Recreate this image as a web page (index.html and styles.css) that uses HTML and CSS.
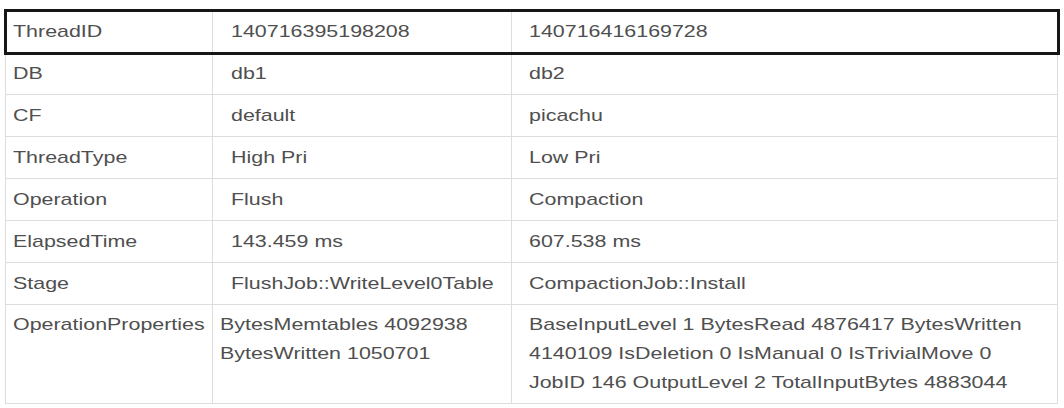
FILE: index.html
```html
<!DOCTYPE html>
<html>
<head>
<meta charset="utf-8">
<link rel="stylesheet" href="styles.css">
</head>
<body>
<table class="props">
  <colgroup>
    <col class="c-key">
    <col class="c-a">
    <col class="c-b">
  </colgroup>
  <tbody>
    <tr class="hl">
      <td class="k"><span class="t">ThreadID</span></td>
      <td class="a"><span class="t">140716395198208</span></td>
      <td class="b"><span class="t">140716416169728</span></td>
    </tr>
    <tr>
      <td class="k"><span class="t">DB</span></td>
      <td class="a"><span class="t">db1</span></td>
      <td class="b"><span class="t">db2</span></td>
    </tr>
    <tr>
      <td class="k"><span class="t">CF</span></td>
      <td class="a"><span class="t">default</span></td>
      <td class="b"><span class="t">picachu</span></td>
    </tr>
    <tr>
      <td class="k"><span class="t">ThreadType</span></td>
      <td class="a"><span class="t">High Pri</span></td>
      <td class="b"><span class="t">Low Pri</span></td>
    </tr>
    <tr>
      <td class="k"><span class="t">Operation</span></td>
      <td class="a"><span class="t">Flush</span></td>
      <td class="b"><span class="t">Compaction</span></td>
    </tr>
    <tr>
      <td class="k"><span class="t">ElapsedTime</span></td>
      <td class="a"><span class="t">143.459 ms</span></td>
      <td class="b"><span class="t">607.538 ms</span></td>
    </tr>
    <tr>
      <td class="k"><span class="t">Stage</span></td>
      <td class="a"><span class="t">FlushJob::WriteLevel0Table</span></td>
      <td class="b"><span class="t">CompactionJob::Install</span></td>
    </tr>
    <tr class="multi">
      <td class="k"><span class="t">OperationProperties</span></td>
      <td class="a tight"><span class="t">BytesMemtables 4092938<br>BytesWritten 1050701</span></td>
      <td class="b"><span class="t">BaseInputLevel 1 BytesRead 4876417 BytesWritten<br>4140109 IsDeletion 0 IsManual 0 IsTrivialMove 0<br>JobID 146 OutputLevel 2 TotalInputBytes 4883044</span></td>
    </tr>
  </tbody>
</table>
</body>
</html>
```

FILE: styles.css
```css
html, body {
  margin: 0;
  background: #ffffff;
}

body {
  padding: 10px 7px 0 5px;
  font-family: "Liberation Sans", Arial, sans-serif;
  font-size: 17px;
  color: #4f4f4f;
}

.props {
  border-collapse: collapse;
  table-layout: fixed;
  width: 1052px;
  border: 1px solid #dddddd;
}

.c-key { width: 207px; }
.c-a { width: 299px; }
.c-b { width: 546px; }

.props td {
  border: 1px solid #dddddd;
  padding: 6px 4px;
  line-height: 29px;
  vertical-align: middle;
  white-space: nowrap;
  overflow: visible;
}

.props td.k { padding-left: 7px; }
.props td.a { padding-left: 18px; }
.props td.a.tight { padding-left: 7px; }
.props td.b { padding-left: 17px; }

.multi td {
  vertical-align: top;
  padding-top: 5px;
}

.t {
  display: inline-block;
  transform: scaleX(1.26);
  transform-origin: 0 50%;
}

.hl {
  outline: 3px solid #161616;
  outline-offset: -1px;
}
```
